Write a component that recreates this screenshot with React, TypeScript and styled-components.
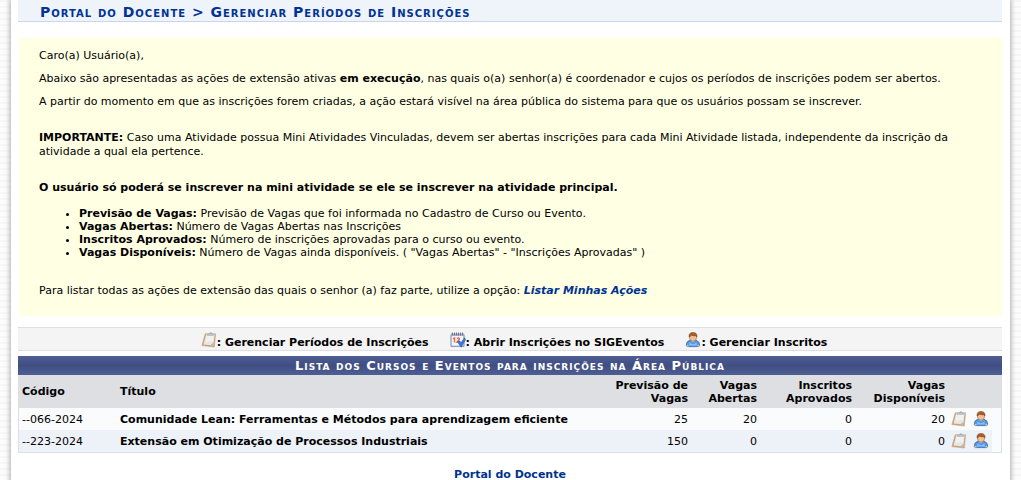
import React from "react";
import styled, { createGlobalStyle } from "styled-components";

const GlobalStyle = createGlobalStyle`
  * { box-sizing: border-box; }
  body {
    margin: 0;
    font: 11px/14px Verdana, "DejaVu Sans", sans-serif;
    color: #000;
    background: repeating-linear-gradient(180deg, #f6f6f6 0 2px, #fcfcfc 2px 6px);
  }
  a { color: #003390; font-weight: bold; text-decoration: none; }
`;

const Page = styled.div`
  min-height: 100vh;
  margin: 0 11px;
  padding: 0 8px 0 7px;
  background: #fff;
  box-shadow: 0 0 5px 1px #aaa;
`;

const Title = styled.h2`
  margin: 0 0 16px;
  height: 22px;
  padding: 3px 22px 0;
  background: #eff3fa;
  border-bottom: 1px solid #c8d5ec;
  color: #003395;
  font-size: 14px;
  line-height: 18px;
  font-variant: small-caps;
  letter-spacing: 1px;
`;

const Description = styled.section`
  margin: 0 0 11px 1px;
  padding: 11px 20px 18px;
  background: #ffffe4;
`;

const Paragraph = styled.p<{ $space?: number }>`
  margin: 0 0 ${(p) => p.$space ?? 9}px;
`;

const Definitions = styled.ul`
  margin: 0 0 25px;
  padding-left: 40px;
  line-height: 13px;
`;

const Legend = styled.div`
  display: flex;
  justify-content: center;
  gap: 21px;
  height: 24px;
  margin-bottom: 5px;
  padding: 4px 0 0 8px;
  background: #f4f4f4;
  border: solid #dedfe3;
  border-width: 1px 0;
  font-weight: bold;
`;

const LegendItem = styled.span`
  display: flex;
  line-height: 22px;
  height: 18px;
`;

const Table = styled.table`
  width: 100%;
  table-layout: fixed;
  border: solid #dedfe3;
  border-width: 0 1px 1px;
  border-collapse: separate;
  border-spacing: 0;
  line-height: 13px;
`;

const Caption = styled.caption`
  height: 19px;
  background: linear-gradient(#4f5f93, #404e82 50%, #4f5f93);
  color: #fff;
  font-size: 13px;
  font-weight: bold;
  font-variant: small-caps;
  letter-spacing: 1px;
  line-height: 19px;
`;

const Col = styled.col<{ $w?: number }>`
  ${(p) => p.$w && `width: ${p.$w}px;`}
`;

const Head = styled.th<{ $num?: boolean }>`
  height: 33px;
  padding: 3px;
  background: #dedfe3;
  text-align: ${(p) => (p.$num ? "right" : "left")};
`;

const Row = styled.tr<{ $even?: boolean }>`
  background: ${(p) => (p.$even ? "linear-gradient(90deg, #edf1f8 calc(100% - 9px), #f9fbfd calc(100% - 9px))" : "#f9fbfd")};
`;

const Cell = styled.td<{ $num?: boolean; $strong?: boolean }>`
  height: 22px;
  padding: 0 3px;
  text-align: ${(p) => (p.$num ? "right" : "left")};
  font-weight: ${(p) => (p.$strong ? "bold" : "normal")};
`;

const IconButton = styled.button`
  display: block;
  width: 16px;
  height: 16px;
  padding: 0;
  border: 0;
  background: none;
  cursor: pointer;
`;

const Icon = styled.svg`
  display: block;
  width: 16px;
  height: 16px;
`;

const Footer = styled.footer`
  padding: 15px 0 5px;
  text-align: center;
`;

const Clipboard = () => (
  <Icon viewBox="0 0 16 16" aria-hidden="true">
    <path d="M4.2 1.8h10.4l-1.3 13.2L.9 13.6z" fill="#cfa274" stroke="#c09870" strokeWidth=".5" />
    <path d="M5.2 2.2h8.4l-1.2 11.4-9.9-1.2z" fill="#e4e6e7" />
    <path d="M5.4 4h7.2l-.5 5-7.4 1z" fill="#f1f1f0" />
    <path d="M9.5 13.2l2.9.4.3-3z" fill="#b5b5b3" />
    <path d="M6 3.6l.7-1.9h1.4L9 .6h1.6l.6 1.1h1.3l.1 1.9z" fill="#98a6ac" />
    <path d="M7.5 2.3h4" stroke="#dde4e7" strokeWidth=".7" />
  </Icon>
);

const CalendarCheck = () => (
  <Icon viewBox="0 0 16 16" aria-hidden="true">
    <path d="M1 2.5h13v11.8H1z" fill="#f0f4ff" stroke="#7a84a8" />
    <path d="M1 1.5h13v2.3H1z" fill="#a4adc6" />
    <path d="M2.5.5v3m2-3v3m2-3v3m2-3v3m2-3v3m2-3v3" stroke="#5b627b" strokeWidth=".8" />
    <path d="M3 7l1.5-1v4.5M7 6.5q2.5-1.2 2.4.7L7 10h3" fill="none" stroke="#f06a3c" strokeWidth="1.4" />
    <path d="M7.5 9.8l2-1 1.5 2 3.6-5 1 1.8-4.5 7.6z" fill="#3679d2" stroke="#2a5cae" strokeWidth=".6" />
  </Icon>
);

const Person = () => (
  <Icon viewBox="0 0 16 16" aria-hidden="true">
    <path d="M1.2 13.6Q1.2 9 5 8.3h6q3.6.8 3.8 5.3-1 1.4-2.8 1H4q-2 .4-2.8-1z" fill="#5599e9" stroke="#2d63b7" strokeWidth=".8" />
    <path d="M4.6 10.5Q8 14 11.4 10.5l.5 3.1H4z" fill="#83c2fb" />
    <path d="M5.8 8.2L8 10.5l2.2-2.3z" fill="#ecbd91" />
    <path d="M1.3 13q1.5-.7 2.7 1.2l-1.5.5zM14.7 13q-1.5-.7-2.7 1.2l1.5.5z" fill="#efb889" />
    <ellipse cx="8" cy="5.2" rx="3.6" ry="4" fill="#f2c197" stroke="#a66534" strokeWidth=".6" />
    <path d="M4 5Q3.5.5 8 .5T12 5l-1.1-1.2q-3 .3-4.4-.6Q5.8 4.5 4 5z" fill="#a95d2c" stroke="#794019" strokeWidth=".5" />
  </Icon>
);

const definitions = [
  ["Previsão de Vagas:", "Previsão de Vagas que foi informada no Cadastro de Curso ou Evento."],
  ["Vagas Abertas:", "Número de Vagas Abertas nas Inscrições"],
  ["Inscritos Aprovados:", "Número de inscrições aprovadas para o curso ou evento."],
  ["Vagas Disponíveis:", 'Número de Vagas ainda disponíveis. ( "Vagas Abertas" - "Inscrições Aprovadas" )'],
];

const courses = [
  { code: "--066-2024", title: "Comunidade Lean: Ferramentas e Métodos para aprendizagem eficiente", counts: [25, 20, 0, 20] },
  { code: "--223-2024", title: "Extensão em Otimização de Processos Industriais", counts: [150, 0, 0, 0] },
];

export default function App() {
  return (
    <>
      <GlobalStyle />
      <Page>
        <Title>Portal do Docente &gt; Gerenciar Períodos de Inscrições</Title>
        <Description>
          <Paragraph>Caro(a) Usuário(a),</Paragraph>
          <Paragraph>
            Abaixo são apresentadas as ações de extensão ativas <b>em execução</b>, nas quais o(a) senhor(a) é
            coordenador e cujos os períodos de inscrições podem ser abertos.
          </Paragraph>
          <Paragraph $space={22}>
            A partir do momento em que as inscrições forem criadas, a ação estará visível na área pública do sistema
            para que os usuários possam se inscrever.
          </Paragraph>
          <Paragraph $space={22}>
            <b>IMPORTANTE:</b> Caso uma Atividade possua Mini Atividades Vinculadas, devem ser abertas inscrições para
            cada Mini Atividade listada, independente da inscrição da atividade a qual ela pertence.
          </Paragraph>
          <Paragraph $space={12}>
            <b>O usuário só poderá se inscrever na mini atividade se ele se inscrever na atividade principal.</b>
          </Paragraph>
          <Definitions>
            {definitions.map(([term, text]) => (
              <li key={term}>
                <b>{term}</b> {text}
              </li>
            ))}
          </Definitions>
          <Paragraph $space={0}>
            Para listar todas as ações de extensão das quais o senhor (a) faz parte, utilize a opção:{" "}
            <a href="#acoes"><i>Listar Minhas Ações</i></a>
          </Paragraph>
        </Description>
        <Legend>
          <LegendItem><Clipboard />: Gerenciar Períodos de Inscrições</LegendItem>
          <LegendItem><CalendarCheck />: Abrir Inscrições no SIGEventos</LegendItem>
          <LegendItem><Person />: Gerenciar Inscritos</LegendItem>
        </Legend>
        <Table>
          <Caption>Lista dos Cursos e Eventos para inscrições na Área Pública</Caption>
          <colgroup>
            <Col $w={98} />
            <Col />
            <Col $w={86} />
            <Col $w={69} />
            <Col $w={95} />
            <Col $w={93} />
            <Col $w={22} />
            <Col $w={31} />
          </colgroup>
          <thead>
            <tr>
              <Head scope="col">Código</Head>
              <Head scope="col">Título</Head>
              <Head scope="col" $num>Previsão de Vagas</Head>
              <Head scope="col" $num>Vagas Abertas</Head>
              <Head scope="col" $num>Inscritos Aprovados</Head>
              <Head scope="col" $num>Vagas Disponíveis</Head>
              <Head as="td" colSpan={2} />
            </tr>
          </thead>
          <tbody>
            {courses.map((course, i) => (
              <Row key={course.code} $even={i % 2 === 1}>
                <Cell>{course.code}</Cell>
                <Cell $strong>{course.title}</Cell>
                {course.counts.map((count, n) => (
                  <Cell key={n} $num>{count}</Cell>
                ))}
                <Cell>
                  <IconButton type="button" aria-label="Gerenciar Períodos de Inscrições"><Clipboard /></IconButton>
                </Cell>
                <Cell>
                  <IconButton type="button" aria-label="Gerenciar Inscritos"><Person /></IconButton>
                </Cell>
              </Row>
            ))}
          </tbody>
        </Table>
        <Footer>
          <a href="#portal">Portal do Docente</a>
        </Footer>
      </Page>
    </>
  );
}
